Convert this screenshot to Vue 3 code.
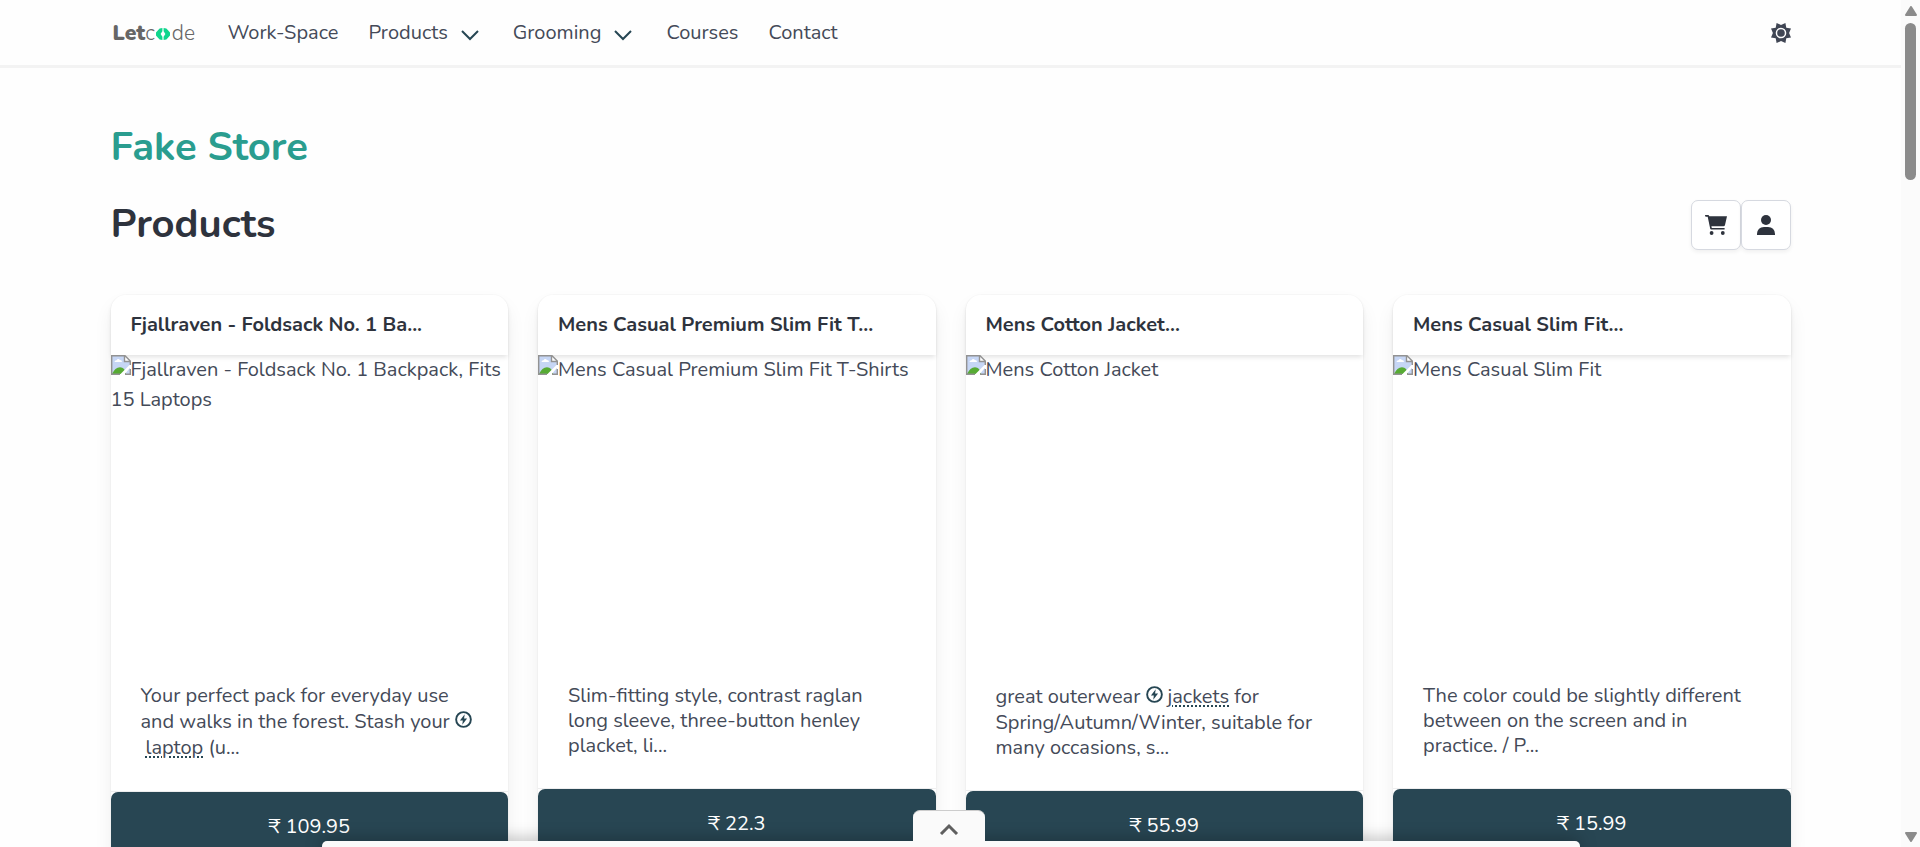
<script setup>
const links = [
  { label: 'Work-Space' },
  { label: 'Products', menu: true },
  { label: 'Grooming', menu: true },
  { label: 'Courses' },
  { label: 'Contact' },
]

const products = [
  {
    title: 'Fjallraven - Foldsack No. 1 Ba...',
    alt: 'Fjallraven - Foldsack No. 1 Backpack, Fits 15 Laptops',
    before: 'Your perfect pack for everyday use and walks in the forest. Stash your',
    link: 'laptop',
    after: ' (u...',
    price: '109.95',
  },
  {
    title: 'Mens Casual Premium Slim Fit T...',
    alt: 'Mens Casual Premium Slim Fit T-Shirts',
    before: 'Slim-fitting style, contrast raglan long sleeve, three-button henley placket, li...',
    price: '22.3',
  },
  {
    title: 'Mens Cotton Jacket...',
    alt: 'Mens Cotton Jacket',
    before: 'great outerwear',
    link: 'jackets',
    after: ' for Spring/Autumn/Winter, suitable for many occasions, s...',
    price: '55.99',
  },
  {
    title: 'Mens Casual Slim Fit...',
    alt: 'Mens Casual Slim Fit',
    before: 'The color could be slightly different between on the screen and in practice. / P...',
    price: '15.99',
  },
]
</script>

<template>
  <div class="page">
    <header class="navbar">
      <nav class="container nav-row" aria-label="Main">
        <a class="logo" href="#" aria-label="Letcode">
          <b>Let</b><span>c</span>
          <svg viewBox="0 0 14 12" width="14" height="12" aria-hidden="true">
            <path d="M6.4 0 V3.2 L4.6 6 L6.4 8.8 V12 Q3 11.8 2.2 10 L0 7.6 V4.4 L2.2 2 Q3 0.2 6.4 0 Z M7.6 0 V3.2 L9.4 6 L7.6 8.8 V12 Q11 11.8 11.8 10 L14 7.6 V4.4 L11.8 2 Q11 0.2 7.6 0 Z" />
          </svg>
          <span>de</span>
        </a>
        <a v-for="l in links" :key="l.label" class="nav-link" :class="{ 'has-menu': l.menu }" href="#">
          {{ l.label }}
          <svg v-if="l.menu" class="chevron" viewBox="0 0 18 11" width="18" height="11" aria-hidden="true">
            <path d="M1 1 L9 9 L17 1" />
          </svg>
        </a>
        <button class="theme" aria-label="Toggle theme">
          <svg viewBox="0 0 20 20" width="20" height="20" aria-hidden="true">
            <path
              fill-rule="evenodd"
              d="M10 1.9 L14.4 0 L15.3 4.7 L20 5.6 L18.1 10 L20 14.4 L15.3 15.3 L14.4 20 L10 18.1 L5.6 20 L4.7 15.3 L0 14.4 L1.9 10 L0 5.6 L4.7 4.7 L5.6 0 Z M10 4.7 A5.3 5.3 0 1 0 10 15.3 A5.3 5.3 0 1 0 10 4.7 Z"
            />
            <circle cx="10" cy="10" r="3.8" />
          </svg>
        </button>
      </nav>
    </header>

    <main class="container main">
      <h1 class="brand">Fake Store</h1>
      <div class="title-row">
        <h2>Products</h2>
        <div class="actions">
          <button aria-label="Cart">
            <svg viewBox="0 0 22 20" width="22" height="20" aria-hidden="true">
              <path d="M0 0 H3 Q4 0 4.3 1.2 H22 L20 10 Q19.7 11.2 18.4 11.2 H6.4 L6.8 13 H19.6 V14.6 H6.2 Q5.4 14.6 5.2 13.8 L2.7 1.7 H0.8 Q0 1.7 0 0 Z" />
              <circle cx="6.6" cy="18" r="1.9" />
              <circle cx="17.8" cy="18" r="1.9" />
            </svg>
          </button>
          <button aria-label="Account">
            <svg viewBox="0 0 18 20" width="18" height="20" aria-hidden="true">
              <circle cx="9" cy="5" r="5" />
              <path d="M0 20 V18.8 Q0.6 12 7 12 H11 Q17.4 12 18 18.8 V20 Z" />
            </svg>
          </button>
        </div>
      </div>

      <section class="grid">
        <article v-for="p in products" :key="p.title" class="card">
          <h3>{{ p.title }}</h3>
          <div class="picture">
            <svg class="broken" viewBox="0 0 20 20" width="20" height="20" aria-hidden="true">
              <path d="M1 1 H14 L19 6 V19 H1 Z" fill="#c6d6f5" />
              <path d="M3.5 7 Q3.5 5.2 5.5 5.2 Q7 3 9 5 Q11 5.2 11 7 Z" fill="#fff" />
              <path d="M1 19 Q4 12.5 9 12.2 Q14 12.5 15 19 Z" fill="#57ab34" />
              <path d="M13.5 1 V6.5 H19 Z" fill="#fff" />
              <path d="M13 20 L20 11.5 V8.5 L8.5 20 Z" fill="#fff" />
              <path d="M0.7 20 V0.7 H14 L19.3 6 V10 M13.5 1 V6.5 H19 M0 19.3 H9 M14 19.3 H19.3 V14" fill="none" stroke="#929292" stroke-width="1.4" />
            </svg>{{ p.alt }}
          </div>
          <p class="desc">
            {{ p.before }}<template v-if="p.link">{{ ' ' }}<svg class="bolt" viewBox="0 0 18 18" width="17" height="17" aria-hidden="true">
                <circle cx="9" cy="9" r="7.8" />
                <path d="M10.3 3.5 L5.2 10 H8.3 L7.7 14.5 L12.8 8 H9.6 Z" />
              </svg><a href="#">{{ p.link }}</a>{{ p.after }}</template>
          </p>
          <footer><button class="price">₹ {{ p.price }}</button></footer>
        </article>
      </section>
    </main>

    <div class="drawer">
      <button class="drawer-tab" aria-label="Expand">
        <svg viewBox="0 0 20 12" width="20" height="12" aria-hidden="true">
          <path d="M2 11 L10 3 L18 11" />
        </svg>
      </button>
    </div>

    <div class="scroll" aria-hidden="true">
      <svg viewBox="0 0 12 10" width="12" height="10"><path d="M6 1 L11 9 H1 Z" /></svg>
      <div class="track"><div class="thumb"></div></div>
      <svg viewBox="0 0 12 10" width="12" height="10"><path d="M6 9 L11 1 H1 Z" /></svg>
    </div>
  </div>
</template>

<style>
html,
body {
  height: 100%;
  overflow: hidden;
}
</style>

<style scoped>
.page {
  height: 100vh;
  overflow: hidden;
  position: relative;
  box-sizing: border-box;
  padding-right: 19px;
  background: #fefefe;
  color: #444a58;
  font: 400 20px/30px Nunito, Lato, 'Noto Sans', sans-serif;
}
a {
  color: inherit;
  text-decoration: none;
}
button {
  font: inherit;
  color: inherit;
  cursor: pointer;
}
.container {
  max-width: 1680px;
  margin: 0 auto;
}
.navbar {
  border-bottom: 3px solid #f3f3f3;
}
.nav-row {
  display: flex;
  align-items: center;
  height: 65px;
}
.logo {
  display: flex;
  align-items: center;
  width: 102px;
  padding-left: 2px;
  box-sizing: border-box;
  color: #666;
  font-size: 21px;
  font-weight: 300;
}
.logo b {
  font-weight: 900;
}
.logo svg {
  fill: #0fd58c;
  margin: 3px 2px 0 1px;
}
.nav-link {
  display: flex;
  align-items: center;
  gap: 13px;
  padding: 0 15px;
  white-space: nowrap;
}
.has-menu {
  padding-right: 19px;
}
.chevron {
  fill: none;
  stroke: #264653;
  stroke-width: 2;
  margin-top: 5px;
}
.theme {
  margin-left: auto;
  padding: 0;
  border: 0;
  background: none;
  display: flex;
  fill: #404654;
}
.main {
  padding-top: 54px;
}
h1,
h2 {
  margin: 0;
  font-size: 40px;
  line-height: 50px;
  font-weight: 700;
}
.brand {
  color: #2a9d8f;
}
.title-row {
  display: flex;
  justify-content: space-between;
  align-items: flex-start;
  margin-top: 28px;
  color: #2e333d;
}
h2 {
  line-height: 48px;
}
.actions {
  display: flex;
}
.actions button {
  width: 50px;
  height: 50px;
  display: flex;
  align-items: center;
  justify-content: center;
  padding: 0;
  background: #fff;
  border: 1px solid #d6d9e0;
  border-radius: 7px;
  box-shadow: 0 2px 4px rgba(10, 10, 10, 0.06);
  fill: #2e333d;
}
.grid {
  display: grid;
  grid-template-columns: repeat(4, 1fr);
  gap: 30px;
  align-items: start;
  margin-top: 45px;
}
.card {
  background: #fff;
  border-radius: 15px;
  box-shadow: 0 10px 20px -2px rgba(10, 10, 10, 0.08), 0 0 0 1px rgba(10, 10, 10, 0.02);
}
h3 {
  margin: 0;
  padding: 15px 20px;
  color: #2e333d;
  font-size: 20px;
  line-height: 30px;
  font-weight: 700;
  box-shadow: 0 3px 5px -1px rgba(10, 10, 10, 0.12);
  border-radius: 15px 15px 0 0;
}
.picture {
  aspect-ratio: 4 / 3;
}
.broken {
  vertical-align: top;
}
.desc {
  margin: 0;
  padding: 30px;
  line-height: 25px;
}
.bolt {
  fill: #264653;
  margin-top: 3px;
}
.bolt circle {
  fill: none;
  stroke: #264653;
  stroke-width: 2;
}
.desc a {
  display: inline-block;
  line-height: 27px;
  margin-left: 5px;
  text-decoration: underline dotted #264653 2px;
  text-underline-offset: 2px;
}
footer {
  border-top: 1px solid #ededee;
}
.price {
  display: block;
  width: 100%;
  padding: 20px;
  border: 0;
  border-radius: 7px;
  background: #284653;
  color: #fff;
}
.drawer {
  position: absolute;
  left: 322px;
  right: 340px;
  bottom: 0;
  height: 6px;
  background: #fafafa;
  border-radius: 5px 5px 0 0;
  box-shadow: 0 0 16px rgba(0, 0, 0, 0.5);
}
.drawer-tab {
  position: absolute;
  bottom: 6px;
  left: 50%;
  margin-left: -38px;
  width: 72px;
  height: 31px;
  padding: 6px 0 0;
  border: 0;
  border-top: 1px solid #ccc;
  border-radius: 7px 7px 0 0;
  background: #fafafa;
  display: flex;
  align-items: center;
  justify-content: center;
}
.drawer-tab svg {
  fill: none;
  stroke: #5f5f5f;
  stroke-width: 3;
}
.scroll {
  position: absolute;
  top: 0;
  right: 0;
  bottom: 0;
  width: 19px;
  box-sizing: border-box;
  padding: 6px 0 5px;
  display: flex;
  flex-direction: column;
  align-items: center;
  background: #fbfbfb;
}
.scroll svg {
  fill: #8b8b8b;
  stroke: #8b8b8b;
  stroke-width: 2;
  stroke-linejoin: round;
}
.track {
  flex: 1;
  padding-top: 7px;
}
.thumb {
  width: 11px;
  height: 157px;
  border-radius: 6px;
  background: #8b8b8b;
}
</style>
